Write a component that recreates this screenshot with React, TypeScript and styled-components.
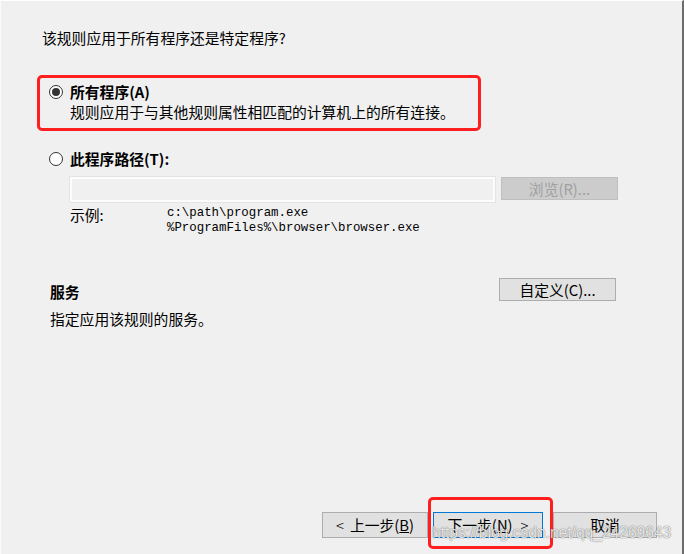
import React from 'react';
import styled, { createGlobalStyle } from 'styled-components';

const Global = createGlobalStyle`
  html, body { margin: 0; padding: 0; background: #f0f0f0; }
  body { font-family: "Noto Sans CJK SC", "Noto Sans", sans-serif; }
  * { box-sizing: border-box; }
`;

const Page = styled.div`
  position: relative;
  width: 684px;
  height: 554px;
  background: #f0f0f0;
  border-top: 1px solid #ffffff;
  border-left: 1px solid #fbfbfb;
  border-right: 2px solid #6d6d6d;
  display: flex;
  flex-direction: column;
  font-family: "Noto Sans CJK SC", sans-serif;
  font-size: 14.8px;
  line-height: 20px;
  color: #000;
  overflow: hidden;
`;

const Question = styled.div`
  margin: 27px 0 0 41px;
`;

const Option = styled.div<{ $highlight?: boolean; $top: number }>`
  margin: ${(p) => p.$top}px 0 0 36px;
  width: 444px;
  border: 3px solid ${(p) => (p.$highlight ? '#ff1f1f' : 'transparent')};
  border-radius: 5px;
  padding: 4px 0 6px 9px;
  display: grid;
  grid-template-columns: 21px auto;
  align-items: center;
  overflow: visible;
`;

const Radio = styled.span<{ $checked?: boolean }>`
  width: 14px;
  height: 14px;
  border-radius: 50%;
  border: 1px solid #333;
  background: #fff;
  display: flex;
  align-items: center;
  justify-content: center;
  &::after {
    content: '';
    width: 8px;
    height: 8px;
    border-radius: 50%;
    background: ${(p) => (p.$checked ? '#333' : 'transparent')};
  }
`;

const OptionTitle = styled.div`
  font-weight: 700;
  white-space: nowrap;
`;

const OptionBody = styled.div`
  grid-column: 2;
  white-space: nowrap;
`;

const PathRow = styled.div`
  display: flex;
  gap: 6px;
  margin-top: 8px;
  align-items: flex-start;
`;

const PathInput = styled.div`
  width: 425px;
  height: 25px;
  border: 2px solid #fcfcfc;
  box-shadow: 0 0 0 1px #e4e4e4;
  background: #f0f0f0;
`;

const Button = styled.button<{ $w: number; $h?: number; $disabled?: boolean; $focused?: boolean }>`
  width: ${(p) => p.$w}px;
  height: ${(p) => p.$h ?? 23}px;
  padding: 0;
  margin: 0;
  font-family: "Noto Sans CJK SC", sans-serif;
  font-size: 14.8px;
  line-height: 20px;
  color: ${(p) => (p.$disabled ? '#a0a0a0' : '#000')};
  background: ${(p) => (p.$disabled ? '#cccccc' : '#e1e1e1')};
  border: 1px solid ${(p) => (p.$disabled ? '#bfbfbf' : p.$focused ? '#0078d7' : '#adadad')};
  display: flex;
  align-items: center;
  justify-content: center;
  white-space: nowrap;
`;

const ExampleRow = styled.div`
  display: grid;
  grid-template-columns: 97px auto;
  margin-top: 3px;
`;

const Code = styled.div`
  font-family: "Liberation Mono", monospace;
  font-size: 12.4px;
  line-height: 15px;
  padding-top: 1px;
  white-space: pre;
`;

const Services = styled.div`
  margin: 37px 0 0 49px;
  width: 566px;
`;

const ServicesHead = styled.div`
  display: flex;
  align-items: flex-start;
  justify-content: space-between;
`;

const ServicesTitle = styled.div`
  font-weight: 700;
`;

const ServicesDesc = styled.div`
  margin-top: 7px;
`;

const Footer = styled.div`
  margin-top: auto;
  padding: 0 25px 16px 0;
  display: flex;
  justify-content: flex-end;
  align-items: center;
`;

const NavGroup = styled.div`
  display: flex;
  gap: 5px;
  margin-right: 10px;
`;

const Focus = styled.div`
  position: relative;
`;

const Annotation = styled.div`
  position: absolute;
  left: -5px;
  top: -15px;
  right: -10px;
  bottom: -11px;
  border: 3px solid #ff1f1f;
  border-radius: 5px;
  pointer-events: none;
  z-index: 2;
`;

const Chevron = styled.span<{ $side: 'l' | 'r' }>`
  font-weight: 300;
  ${(p) => (p.$side === 'l' ? 'margin-right: 6px;' : 'margin-left: 8px;')}
`;

const Watermark = styled.div`
  position: absolute;
  left: 431px;
  top: 524px;
  font-family: "Liberation Sans", Arial, sans-serif;
  font-size: 15.6px;
  line-height: 16px;
  color: rgba(255, 255, 255, 0.85);
  text-shadow: 0 0 1px rgba(0, 0, 0, 0.55), 0 0 2px rgba(0, 0, 0, 0.2);
  white-space: nowrap;
  pointer-events: none;
  z-index: 3;
`;

export default function App() {
  return (
    <>
      <Global />
      <Page>
        <Question>该规则应用于所有程序还是特定程序?</Question>

        <Option $highlight $top={27}>
          <Radio $checked />
          <OptionTitle>所有程序(A)</OptionTitle>
          <OptionBody>规则应用于与其他规则属性相匹配的计算机上的所有连接。</OptionBody>
        </Option>

        <Option $top={11}>
          <Radio />
          <OptionTitle>此程序路径(T):</OptionTitle>
          <OptionBody>
            <PathRow>
              <PathInput />
              <Button $w={117} $disabled>浏览(R)...</Button>
            </PathRow>
            <ExampleRow>
              <span>示例:</span>
              <Code>{'c:\\path\\program.exe\n%ProgramFiles%\\browser\\browser.exe'}</Code>
            </ExampleRow>
          </OptionBody>
        </Option>

        <Services>
          <ServicesHead>
            <ServicesTitle>服务</ServicesTitle>
            <Button $w={117} style={{ marginTop: -4 }}>自定义(C)...</Button>
          </ServicesHead>
          <ServicesDesc>指定应用该规则的服务。</ServicesDesc>
        </Services>

        <Footer>
          <NavGroup>
            <Button $w={106} $h={26}>
              <Chevron $side="l">&lt;</Chevron>上一步(<u>B</u>)
            </Button>
            <Focus>
              <Button $w={110} $h={26} $focused>
                下一步(<u>N</u>)<Chevron $side="r">&gt;</Chevron>
              </Button>
              <Annotation />
            </Focus>
          </NavGroup>
          <Button $w={104} $h={26}>取消</Button>
        </Footer>

        <Watermark>https://blog.csdn.net/qq_24269643</Watermark>
      </Page>
    </>
  );
}
